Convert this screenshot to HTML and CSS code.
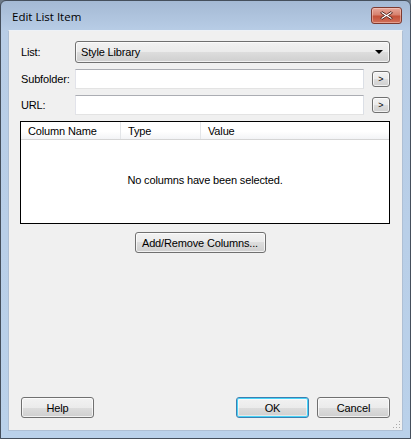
FILE: index.html
```html
<!DOCTYPE html>
<html lang="en">
  <head>
    <meta charset="UTF-8" />
    <title>Edit List Item</title>
    <link rel="stylesheet" href="styles.css">
  </head>
  <body>
    <div class="window">
      <div class="titlebar">
        <span class="title">Edit List Item</span>
        <button type="button" class="close" aria-label="Close">
          <svg width="15" height="11" viewBox="0 0 15 11">
            <path d="M3 1.5 L7.5 4.5 L12 1.5 L13.5 3 L9.5 5.5 L13.5 8 L12 9.5 L7.5 6.5 L3 9.5 L1.5 8 L5.5 5.5 L1.5 3 Z" fill="#fff" stroke="#5a2a22" stroke-width="1" stroke-linejoin="round"/>
          </svg>
        </button>
      </div>
      <div class="client">
        <div class="form">
          <div class="row row-combo">
            <label class="label">List:</label>
            <div class="combo">
              <span>Style Library</span>
              <span class="arrow"></span>
            </div>
          </div>
          <div class="row">
            <label class="label">Subfolder:</label>
            <div class="textbox"></div>
            <button type="button" class="small-btn">&gt;</button>
          </div>
          <div class="row">
            <label class="label">URL:</label>
            <div class="textbox"></div>
            <button type="button" class="small-btn">&gt;</button>
          </div>
        </div>

        <div class="listview">
          <div class="lv-header">
            <div class="col col-name">Column Name</div>
            <div class="col col-type">Type</div>
            <div class="col col-value">Value</div>
          </div>
          <div class="lv-body">No columns have been selected.</div>
        </div>

        <div class="center">
          <button type="button" class="btn btn-add">Add/Remove Columns...</button>
        </div>

        <div class="footer">
          <button type="button" class="btn">Help</button>
          <div class="footer-right">
            <button type="button" class="btn btn-default">OK</button>
            <button type="button" class="btn">Cancel</button>
          </div>
        </div>
        <div class="grip"></div>
      </div>
    </div>
  </body>
</html>
```

FILE: styles.css
```css
body {
  margin: 0;
  background: #6d7a88;
  font-family: "Liberation Sans", Arial, sans-serif;
  font-size: 11px;
  letter-spacing: -0.15px;
  color: #000;
}

.window {
  width: 409px;
  height: 437px;
  border: 1px solid #454f5c;
  border-radius: 6px 6px 0 0;
  background: linear-gradient(to bottom, #a4b9d4 0px, #b8cde6 30px, #bad1ea 100%);
  display: flex;
  flex-direction: column;
  overflow: hidden;
}

.titlebar {
  height: 29px;
  display: flex;
  align-items: center;
  justify-content: space-between;
  padding: 0 8px 0 11px;
}

.title {
  font-family: "Open Sans", "Noto Sans", sans-serif;
  font-size: 11.5px;
  letter-spacing: 0;
  color: #000;
  margin-top: 2px;
}

.close {
  width: 31px;
  height: 17px;
  padding: 0;
  margin-top: -1px;
  border: 1px solid #7d3a30;
  border-radius: 3px;
  background: linear-gradient(to bottom, #e8a89b 0%, #d7826f 45%, #c45139 55%, #d0705a 100%);
  display: flex;
  align-items: center;
  justify-content: center;
  box-shadow: inset 0 0 0 1px rgba(255, 220, 210, 0.45);
}

.client {
  flex: 1;
  margin: 0 7px 7px 7px;
  background: #f0f0f0;
  border: 1px solid #aebfd4;
  border-top-color: #eef2f7;
  display: flex;
  flex-direction: column;
  padding: 10px 12px 12px 11px;
  position: relative;
}

.form {
  display: flex;
  flex-direction: column;
  gap: 6px;
}

.row {
  display: flex;
  align-items: center;
  height: 20px;
}

.row-combo {
  height: 22px;
}

.label {
  width: 54px;
  padding-left: 1px;
}

.combo {
  flex: 1;
  height: 20px;
  border: 1px solid #707070;
  border-radius: 3px;
  background: linear-gradient(to bottom, #f2f2f2 0%, #ebebeb 50%, #dddddd 50%, #cfcfcf 100%);
  display: flex;
  align-items: center;
  justify-content: space-between;
  padding: 0 6px 0 5px;
  box-shadow: inset 0 0 0 1px rgba(255, 255, 255, 0.7);
}

.arrow {
  width: 0;
  height: 0;
  border-left: 4px solid transparent;
  border-right: 4px solid transparent;
  border-top: 4px solid #000;
}

.textbox {
  flex: 1;
  height: 18px;
  background: #fff;
  border: 1px solid #e3e3e3;
  border-top-color: #abadb3;
  border-left-color: #e2e3ea;
  border-right-color: #dbdfe6;
}

.small-btn {
  width: 18px;
  height: 16px;
  margin-left: 8px;
  padding: 0;
  font-family: "Liberation Sans", Arial, sans-serif;
  font-size: 9px;
  border: 1px solid #707070;
  border-radius: 3px;
  background: linear-gradient(to bottom, #f2f2f2 0%, #ebebeb 50%, #dddddd 50%, #cfcfcf 100%);
  box-shadow: inset 0 0 0 1px rgba(255, 255, 255, 0.7);
}

.listview {
  margin-top: 6px;
  height: 101px;
  border: 1px solid #000;
  background: #fff;
  display: flex;
  flex-direction: column;
}

.lv-header {
  height: 17px;
  display: flex;
  background: linear-gradient(to bottom, #ffffff 0%, #ffffff 55%, #f3f4f6 100%);
  border-bottom: 1px solid #d5d5d5;
}

.col {
  display: flex;
  align-items: center;
  padding-left: 7px;
  border-right: 1px solid #e3e5e8;
}

.col-name {
  width: 92px;
}

.col-type {
  width: 72px;
}

.col-value {
  flex: 1;
  border-right: none;
}

.lv-body {
  flex: 1;
  display: flex;
  align-items: center;
  justify-content: center;
  padding-bottom: 4px;
}

.center {
  display: flex;
  justify-content: center;
  margin-top: 8px;
  padding-right: 10px;
}

.btn {
  height: 21px;
  min-width: 73px;
  padding: 0 4px;
  white-space: nowrap;
  font-family: "Liberation Sans", Arial, sans-serif;
  font-size: 11px;
  letter-spacing: -0.15px;
  color: #000;
  border: 1px solid #707070;
  border-radius: 3px;
  background: linear-gradient(to bottom, #f2f2f2 0%, #ebebeb 50%, #dddddd 50%, #cfcfcf 100%);
  box-shadow: inset 0 0 0 1px rgba(255, 255, 255, 0.7);
}

.btn-add {
  width: 131px;
}

.btn-default {
  width: 72px;
  border-color: #3c7fb1;
  box-shadow: inset 0 0 0 1px #48d4f8, inset 0 0 0 2px rgba(255, 255, 255, 0.5);
}

.footer {
  margin-top: auto;
  display: flex;
  justify-content: space-between;
  padding-left: 1px;
}

.footer-right {
  display: flex;
  gap: 8px;
}

.grip {
  position: absolute;
  right: 2px;
  bottom: 2px;
  width: 8px;
  height: 8px;
  background:
    radial-gradient(circle, #a9a9a9 0.8px, transparent 1px) 0 0 / 3px 3px;
  clip-path: polygon(100% 0, 100% 100%, 0 100%);
}
```
